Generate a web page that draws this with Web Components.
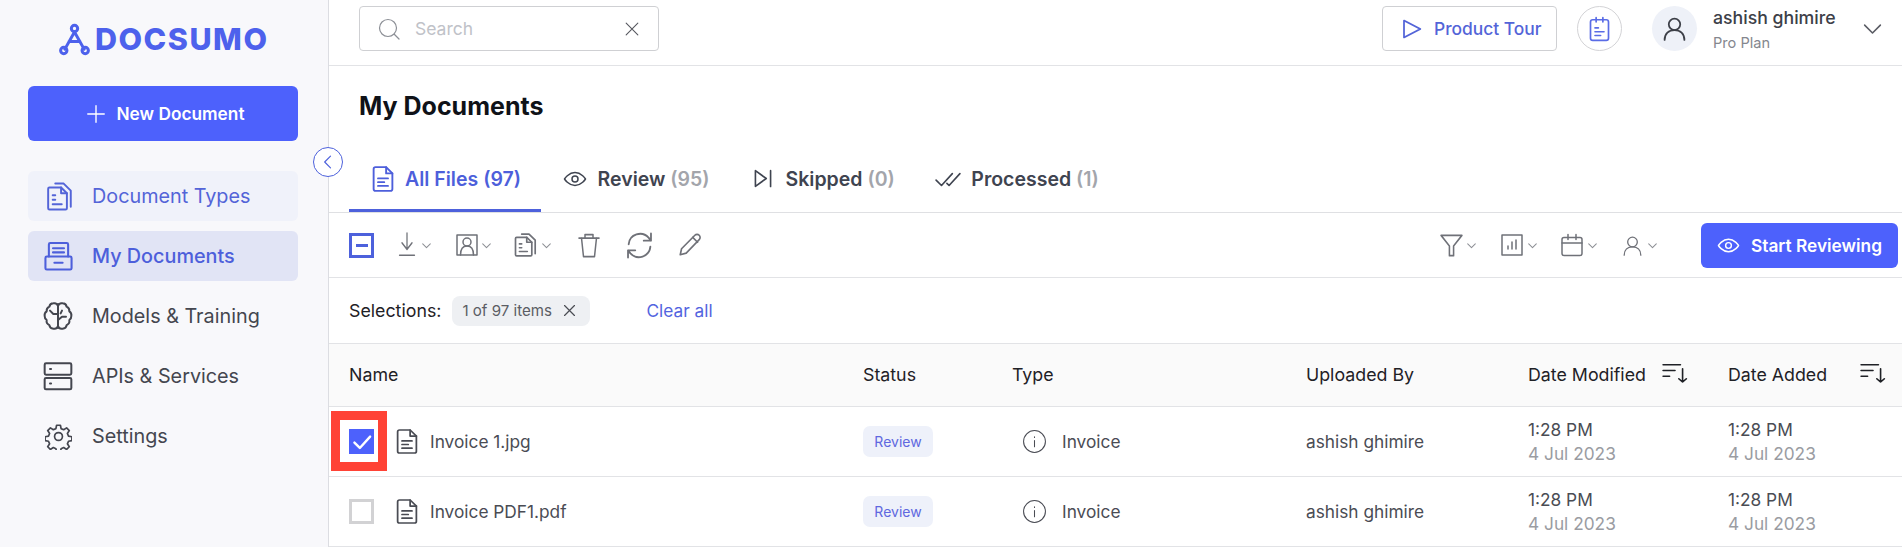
<!DOCTYPE html>
<html>
<head>
<meta charset="utf-8">
<title>Docsumo</title>
<style>
    html, body { margin: 0; padding: 0; height: 547px; overflow: hidden; background: #fff; }
    body { font-family: Inter, "Liberation Sans", sans-serif; color: #3d4048; }
</style>
</head>
<body>
<ds-app>
    <ds-sidebar slot="side"></ds-sidebar>
    <ds-topbar slot="top"></ds-topbar>
    <ds-heading slot="main">My Documents</ds-heading>
    <ds-tabs slot="main"></ds-tabs>
    <ds-toolbar slot="main"></ds-toolbar>
    <ds-selections slot="main"></ds-selections>
    <ds-table slot="main">
        <ds-row name="Invoice 1.jpg" checked marked></ds-row>
        <ds-row name="Invoice PDF1.pdf"></ds-row>
    </ds-table>
</ds-app>

<script>
(() => {

    const ICONS = {
        plus: '<path d="M12 3v18M3 12h18"/>',
        left: '<path d="M15 5l-7 7 7 7"/>',
        chevron: '<path d="M5 9l7 7 7-7"/>',
        close: '<path d="M5 5l14 14M19 5L5 19"/>',
        search: '<circle cx="11" cy="11" r="8.5"/><path d="M17.5 17.5L22 22"/>',
        play: '<path d="M6 3.5L20 12 6 20.5z"/>',
        file: '<path d="M6 2.5h8.5l5 5V20a1.5 1.5 0 0 1-1.5 1.5H6A1.5 1.5 0 0 1 4.500 20V4A1.500 1.500 0 0 1 6 2.500z"/><path d="M14.500 2.500v5h5M8 11.500h8M8 14.500h5M8 17.500h8"/>',
        types: '<path d="M5 5h9l4.500 4.500V21a1 1 0 0 1-1 1H5a1 1 0 0 1-1-1V6a1 1 0 0 1 1-1z"/><path d="M14 5v4.500h4.500M7.500 11h2M7.500 14.500h2M7.500 18h7"/><path d="M9.500 2h6.500l5.500 5.500V20"/>',
        drawer: '<path d="M5 12V3.200a1 1 0 0 1 1-1h12a1 1 0 0 1 1 1V12"/><path d="M8 6h8M8 9h8"/><rect x="2.500" y="12" width="19" height="9.500" rx="1"/><path d="M9 16.500h6"/>',
        brain: '<path d="M12 3v18"/><path d="M12 4.500A3 3 0 0 0 8.500 2.500 3.200 3.200 0 0 0 5.500 5 3.500 3.500 0 0 0 3.500 8.500 3.500 3.500 0 0 0 2 12a3.500 3.500 0 0 0 1.500 3 3.500 3.500 0 0 0 2 3.800 3.200 3.200 0 0 0 3 2.700 3 3 0 0 0 3.500-2"/><path d="M12 4.500A3 3 0 0 1 15.500 2.500 3.200 3.200 0 0 1 18.500 5 3.500 3.500 0 0 1 20.500 8.500 3.500 3.500 0 0 1 22 12a3.500 3.500 0 0 1-1.500 3 3.500 3.500 0 0 1-2 3.800 3.200 3.200 0 0 1-3 2.700 3 3 0 0 1-3.500-2"/><path d="M12 10.500H8.500L6 8M12 15l3-2.500h3M15 8l-1 2"/>',
        server: '<rect x="2" y="2.500" width="20" height="8.500" rx="1"/><rect x="2" y="13.500" width="20" height="8.500" rx="1"/><path d="M6 6.700h.8M6 17.700h.8"/>',
        gear: '<circle cx="12" cy="12" r="3.500"/><path d="M10.300 2h3.400l.6 3 2.300 1 2.600-1.700 2.400 2.400-1.700 2.600 1 2.300 3 .6v3.400l-3 .6-1 2.300 1.700 2.600-2.400 2.400-2.600-1.700-2.300 1-.6 3h-3.400l-.6-3-2.300-1-2.600 1.700-2.400-2.400 1.700-2.600-1-2.300-3-.6v-3.400l3-.6 1-2.300-1.700-2.600 2.400-2.400 2.600 1.700 2.300-1z"/>',
        eye: '<path d="M1.500 12S5.500 5.500 12 5.500 22.500 12 22.500 12 18.500 18.500 12 18.500 1.500 12 1.500 12z"/><circle cx="12" cy="12" r="3"/>',
        skip: '<path d="M5 5l10 7-10 7z"/><path d="M19 5v14"/>',
        checks: '<path d="M1 13l5 5L16 7M11 16l2 2L23 7"/>',
        note: '<rect x="4" y="3.500" width="16" height="19" rx="2"/><path d="M9 1.500v4M15 1.500v4M8 11h3M8 14.500h8M8 18h5"/>',
        user: '<circle cx="12" cy="8" r="5.500"/><path d="M2.500 23c0-6 4-9.500 9.500-9.500s9.500 3.500 9.500 9.500"/>',
        download: '<path d="M12 1v14M6 10l6 6 6-6M3 21.500h18"/>',
        contact: '<rect x="2" y="2" width="20" height="20"/><circle cx="12" cy="9" r="4"/><path d="M5.500 22c0-6 2.500-9 6.500-9s6.500 3 6.500 9"/>',
        trash: '<path d="M2 6h20M8 6V3h8v3M4.500 6l2 16h11l2-16"/>',
        refresh: '<path d="M3 11A9.500 9.500 0 0 1 19.500 5.500L21.500 8M21.500 2v6h-6M21 13A9.500 9.500 0 0 1 4.500 18.500L2.500 16M2.500 22v-6h6"/>',
        pencil: '<path d="M3 21l1.200-5.500L16.500 3a2.500 2.500 0 0 1 4 4L8.500 19.500z"/><path d="M14.500 5l4.500 4.500"/>',
        filter: '<path d="M2 3h20l-8 9.500V21l-4 0v-8.500z"/>',
        chart: '<rect x="2" y="2" width="20" height="20"/><path d="M8 16v-3M12 16V9M16 16V7"/>',
        calendar: '<rect x="2" y="4.500" width="20" height="18" rx="2"/><path d="M2 10h20M8 1.500v5M16 1.500v5"/>',
        sort: '<path d="M1 4h16M1 10h11M1 16h6M19 8v14M15.500 18.500L19 22l3.500-3.500"/>',
        info: '<circle cx="12" cy="12" r="10.500"/><path d="M12 11v6M12 7.500v.6"/>',
        check: '<path d="M5 12.500l5 5L19.500 7"/>',
        logo: '<path d="M12 6.500L5 19M12 6.500L19 19M8 13.500h8"/><circle cx="12" cy="4" r="2.300"/><circle cx="4.200" cy="20" r="2.300"/><circle cx="19.800" cy="20" r="2.300"/>'
    };

    // small base class: open shadow root from a html string
    class Base extends HTMLElement {
        constructor() {
            super();
            this.attachShadow({mode: 'open'});
        }
        connectedCallback() {
            this.shadowRoot.innerHTML = this.render();
        }
    }

    const define = (name, render) => customElements.define(name, class extends Base {
        render() { return render(this); }
    });

    customElements.define('ds-icon', class extends HTMLElement {
        constructor() {
            super();
            this.attachShadow({mode: 'open'});
        }
        connectedCallback() {
            const size = this.getAttribute('size') || 24;
            const h = this.getAttribute('h') || size;
            const weight = this.getAttribute('weight') || 1.5;
            this.shadowRoot.innerHTML = `
                <style>
                    :host { display: inline-flex; flex: none; color: inherit; }
                    svg { display: block; fill: none; stroke: currentColor; stroke-linecap: round; stroke-linejoin: round; }
                </style>
                <svg width="${size}" height="${h}" viewBox="0 0 24 24" preserveAspectRatio="none" stroke-width="${weight}">${ICONS[this.getAttribute('name')]}</svg>`;
        }
    });

    define('ds-app', () => `
        <style>
            :host { display: grid; grid-template-columns: 329px 1fr; width: 1902px; height: 547px; overflow: hidden; position: relative; }
            aside { background: #f8f8fb; border-right: 1px solid #dcdde2; box-sizing: border-box; }
            section { display: flex; flex-direction: column; min-width: 0; }
        </style>
        <aside><slot name="side"></slot></aside>
        <section>
            <slot name="top"></slot>
            <slot name="main"></slot>
        </section>`);

    define('ds-sidebar', () => `
        <style>
            :host { display: flow-root; position: relative; height: 547px; z-index: 2; }
            .logo { display: flex; align-items: center; height: 30px; margin: 24px 0 32px 58px; color: #4d61ec; }
            .logo b { font: 800 30.500px/30px Inter, sans-serif; letter-spacing: 1.500px; margin-left: 4px; }
            .new { display: flex; align-items: center; justify-content: center; gap: 9px; width: 270px; height: 55px; margin-left: 28px; box-sizing: border-box; padding-left: 4px;
                   background: #4d61fc; border-radius: 6px; color: #fff; font: 600 17.300px Inter, sans-serif; }
            nav { display: flex; flex-direction: column; gap: 10px; margin: 30px 0 0 28px; width: 270px; }
            .collapse { position: absolute; left: 313px; top: 147px; width: 30px; height: 30px; box-sizing: border-box; border: 1px solid #4d61dc; border-radius: 50%;
                        background: #fff; color: #4d61dc; display: flex; align-items: center; justify-content: center; }
        </style>
        <div class="logo"><ds-icon name="logo" size="33" h="33" weight="2.200"></ds-icon><b>DOCSUMO</b></div>
        <div class="new"><ds-icon name="plus" size="22" weight="1.500"></ds-icon>New Document</div>
        <nav>
            <ds-nav icon="types" tone="soft" size="31">Document Types</ds-nav>
            <ds-nav icon="drawer" tone="active" size="33">My Documents</ds-nav>
            <ds-nav icon="brain" size="32">Models &amp; Training</ds-nav>
            <ds-nav icon="server" size="32">APIs &amp; Services</ds-nav>
            <ds-nav icon="gear" size="27">Settings</ds-nav>
        </nav>
        <div class="collapse"><ds-icon name="left" size="20" weight="1.400"></ds-icon></div>`);

    define('ds-nav', (el) => `
        <style>
            :host { display: flex; align-items: center; height: 50px; border-radius: 6px; padding-left: 14px; gap: 18px; font: 400 19.800px Inter, sans-serif; color: #44464f; }
            :host([tone="soft"]) { background: #f0f2fa; color: #5364d8; }
            :host([tone="active"]) { background: #e1e4f5; color: #4d5fdb; font-weight: 500; }
            .slot { width: 32px; display: flex; justify-content: center; }
        </style>
        <div class="slot"><ds-icon name="${el.getAttribute('icon')}" size="${el.getAttribute('size')}"></ds-icon></div>
        <slot></slot>`);

    define('ds-topbar', () => `
        <style>
            :host { display: flex; align-items: center; height: 66px; box-sizing: border-box; border-bottom: 1px solid #e2e3e6; padding: 0 0 8px 30px; flex: none; }
            .search { display: flex; align-items: center; width: 300px; height: 45px; box-sizing: border-box; border: 1px solid #cfd0d3; border-radius: 4px; padding: 0 16px 0 17px; color: #8c8f96; }
            .search span { flex: 1; margin-left: 14px; color: #c0c2c8; font-size: 17.500px; }
            .tour { margin-left: auto; display: flex; align-items: center; width: 175px; height: 45px; box-sizing: border-box; border: 1px solid #cfd0d3; border-radius: 4px; padding-left: 14px; gap: 9px; color: #5364d8; font-size: 17.400px; font-weight: 500; }
            .note { margin-left: 20px; width: 45px; height: 45px; box-sizing: border-box; border: 1px solid #d3d3d6; border-radius: 50%; display: flex; align-items: center; justify-content: center; color: #5a6ce6; }
            .avatar { margin-left: 30px; width: 45px; height: 45px; border-radius: 50%; background: #eef1f8; display: flex; align-items: center; justify-content: center; color: #3d4048; }
            .who { margin-left: 16px; width: 146px; padding-top: 2px; }
            .who b { display: block; font-size: 17.700px; font-weight: 500; line-height: 22px; color: #3d4048; }
            .who small { display: block; font-size: 14.600px; line-height: 20px; color: #85878e; margin-top: 4px; }
            .arrow { color: #5a5c64; margin-right: 16px; display: flex; }
        </style>
        <div class="search"><ds-icon name="search" size="24" weight="1.200"></ds-icon><span>Search</span><ds-icon name="close" size="20" weight="1.300" style="color:#55575e"></ds-icon></div>
        <div class="tour"><ds-icon name="play" size="28" h="24" weight="1.500"></ds-icon>Product Tour</div>
        <div class="note"><ds-icon name="note" size="27" h="26" weight="1.500"></ds-icon></div>
        <div class="avatar"><ds-icon name="user" size="25" weight="1.700"></ds-icon></div>
        <div class="who"><b>ashish ghimire</b><small>Pro Plan</small></div>
        <div class="arrow"><ds-icon name="chevron" size="27" weight="1.400"></ds-icon></div>`);

    define('ds-heading', () => `
        <style>
            :host { display: block; height: 83px; padding: 25px 0 0 30px; box-sizing: border-box; font: 700 25px/30px Inter, sans-serif; color: #0f1218; flex: none; }
        </style>
        <slot></slot>`);

    define('ds-tabs', () => `
        <style>
            :host { display: flex; height: 64px; box-sizing: border-box; border-bottom: 1px solid #dfe0e3; padding-left: 20px; flex: none; }
        </style>
        <ds-tab icon="file" count="97" w="30" h="30" pad="18.500" gap="7.500" active>All Files</ds-tab>
        <ds-tab icon="eye" count="95" w="24" h="24" pad="21.500" gap="11">Review</ds-tab>
        <ds-tab icon="skip" count="0" w="26" h="27" pad="20.600" gap="9.400">Skipped</ds-tab>
        <ds-tab icon="checks" count="1" w="26" h="26" pad="20" gap="10.500">Processed</ds-tab>`);

    define('ds-tab', (el) => `
        <style>
            :host { display: flex; align-items: center; gap: ${el.getAttribute('gap')}px; height: 63px; box-sizing: border-box; padding: 0 20px 4px ${el.getAttribute('pad')}px; font: 600 19.500px Inter, sans-serif; color: #3f4450; position: relative; }
            :host([active]) { color: #4d5fdb; box-shadow: inset 0 -3px 0 #4d61dc; }
            i { font-style: normal; color: #a3a5ab; }
            :host([active]) i { color: inherit; }
        </style>
        <ds-icon name="${el.getAttribute('icon')}" size="${el.getAttribute('w')}" h="${el.getAttribute('h')}"></ds-icon>
        <span><slot></slot> <i>(${el.getAttribute('count')})</i></span>`);

    define('ds-toolbar', () => `
        <style>
            :host { display: flex; align-items: center; height: 65px; box-sizing: border-box; border-bottom: 1px solid #e2e3e6; padding: 0 4px 0 20px; color: #6f7178; flex: none; }
            .minus { width: 25px; height: 25px; box-sizing: border-box; border: 3px solid #4d61dc; display: flex; align-items: center; justify-content: center; flex: none; }
            .minus::before { content: ""; width: 12px; height: 3px; background: #4d61dc; }
            .group { display: flex; align-items: center; }
            .gap { flex: 1; }
            .start { display: flex; align-items: center; width: 197px; height: 45px; box-sizing: border-box; background: #4d61fc; border-radius: 6px; color: #fff; font: 600 17.300px Inter, sans-serif; padding-left: 15.600px; gap: 11.400px; margin-left: 42px; flex: none; }
        </style>
        <div class="minus"></div>
        <div class="group">
            <ds-tool icon="download" w="20" h="26" gap="3" style="margin-left:22.500px"></ds-tool>
            <ds-tool icon="contact" w="24" h="24" gap="1.500" style="margin-left:22.200px"></ds-tool>
            <ds-tool icon="types" w="27" h="26" gap="1.800" style="margin-left:18.200px"></ds-tool>
            <ds-icon name="trash" size="24" h="28" style="margin-left:23.700px"></ds-icon>
            <ds-icon name="refresh" size="29" style="margin-left:23.700px"></ds-icon>
            <ds-icon name="pencil" size="26" style="margin-left:23.100px"></ds-icon>
        </div>
        <div class="gap"></div>
        <div class="group">
            <ds-tool icon="filter" w="25" h="27" gap="1.500"></ds-tool>
            <ds-tool icon="chart" w="24" h="24" gap="2" style="margin-left:22px"></ds-tool>
            <ds-tool icon="calendar" w="24" h="24" gap="2" style="margin-left:21px"></ds-tool>
            <ds-tool icon="user" w="21" h="21" gap="3" style="margin-left:23px"></ds-tool>
        </div>
        <div class="start"><ds-icon name="eye" size="23"></ds-icon>Start Reviewing</div>`);

    define('ds-tool', (el) => `
        <style>
            :host { display: flex; align-items: center; gap: ${el.getAttribute('gap')}px; }
            .arrow { color: #8d8f95; }
        </style>
        <ds-icon name="${el.getAttribute('icon')}" size="${el.getAttribute('w')}" h="${el.getAttribute('h')}"></ds-icon>
        <ds-icon class="arrow" name="chevron" size="13" weight="1.900"></ds-icon>`);

    define('ds-selections', () => `
        <style>
            :host { display: flex; align-items: center; height: 66px; box-sizing: border-box; border-bottom: 1px solid #e2e3e6; padding-left: 20px; font: 400 17.800px Inter, sans-serif; color: #1f2126; flex: none; }
            .chip { display: flex; align-items: center; height: 30px; width: 138px; box-sizing: border-box; margin-left: 11px; padding: 0 12px 0 10px; border-radius: 8px; background: #eef0f3; color: #5b5d64; font-size: 15.100px; justify-content: space-between; }
            .clear { margin-left: 56px; color: #5364e0; font-size: 17.300px; }
        </style>
        <span>Selections:</span>
        <div class="chip">1 of 97 items<ds-icon name="close" size="17" weight="1.700" style="color:#4a4c53"></ds-icon></div>
        <span class="clear">Clear all</span>`);

    const COLUMNS = '514px 149px 294px 222px 200px 1fr';

    define('ds-table', () => `
        <style>
            :host { display: block; flex: none; }
            header { display: grid; grid-template-columns: ${COLUMNS}; align-items: center; height: 63px; box-sizing: border-box; background: #fafafa; border-bottom: 1px solid #e2e3e6; padding: 0 0 2px 20px; font: 400 17.800px Inter, sans-serif; color: #1f2126; }
            .sort { display: flex; align-items: center; }
            .sort ds-icon { margin-bottom: 3px; }
            .modified { gap: 16px; }
            .added { gap: 33px; }
        </style>
        <header>
            <span>Name</span><span>Status</span><span>Type</span><span>Uploaded By</span>
            <span class="sort modified">Date Modified<ds-icon name="sort" size="26" h="23"></ds-icon></span>
            <span class="sort added">Date Added<ds-icon name="sort" size="26" h="23"></ds-icon></span>
        </header>
        <slot></slot>`);

    define('ds-row', (el) => `
        <style>
            :host { display: grid; grid-template-columns: ${COLUMNS}; align-items: center; height: 70px; box-sizing: border-box; border-bottom: 1px solid #e2e3e6; padding-left: 20px; font: 400 17.300px Inter, sans-serif; color: #4a4c54; position: relative; }
            .name { display: flex; align-items: center; }
            .box { width: 25px; height: 25px; box-sizing: border-box; border: 3px solid #d2d2d4; margin-right: 17.700px; flex: none; }
            .box.on { border: none; background: #4d61fc; color: #fff; display: flex; align-items: center; justify-content: center; }
            .mark { position: absolute; left: 2px; top: 4px; width: 56px; height: 60px; box-sizing: border-box; border: 9px solid #ff4235; }
            .file { margin-right: 8.300px; }
            .chip { display: inline-flex; align-items: center; justify-content: center; width: 70px; height: 31px; border-radius: 7px; background: #eef1fa; color: #5f68e0; font-size: 14px; }
            .type { display: flex; align-items: center; gap: 15.500px; padding-left: 9.500px; }
            .date { line-height: 24px; }
            .date small { display: block; font-size: 17.300px; color: #9a9ca2; }
        </style>
        <div class="name">
            <div class="box ${el.hasAttribute('checked') ? 'on' : ''}">${el.hasAttribute('checked') ? '<ds-icon name="check" size="26" weight="2.200"></ds-icon>' : ''}</div>
            <ds-icon class="file" name="file" size="30" h="29" weight="1.400"></ds-icon>
            <span>${el.getAttribute('name')}</span>
        </div>
        <div><span class="chip">Review</span></div>
        <div class="type"><ds-icon name="info" size="25" weight="1"></ds-icon>Invoice</div>
        <div>ashish ghimire</div>
        <div class="date">1:28 PM<small>4 Jul 2023</small></div>
        <div class="date">1:28 PM<small>4 Jul 2023</small></div>
        ${el.hasAttribute('marked') ? '<div class="mark"></div>' : ''}`);

})();
</script>
</body>
</html>
